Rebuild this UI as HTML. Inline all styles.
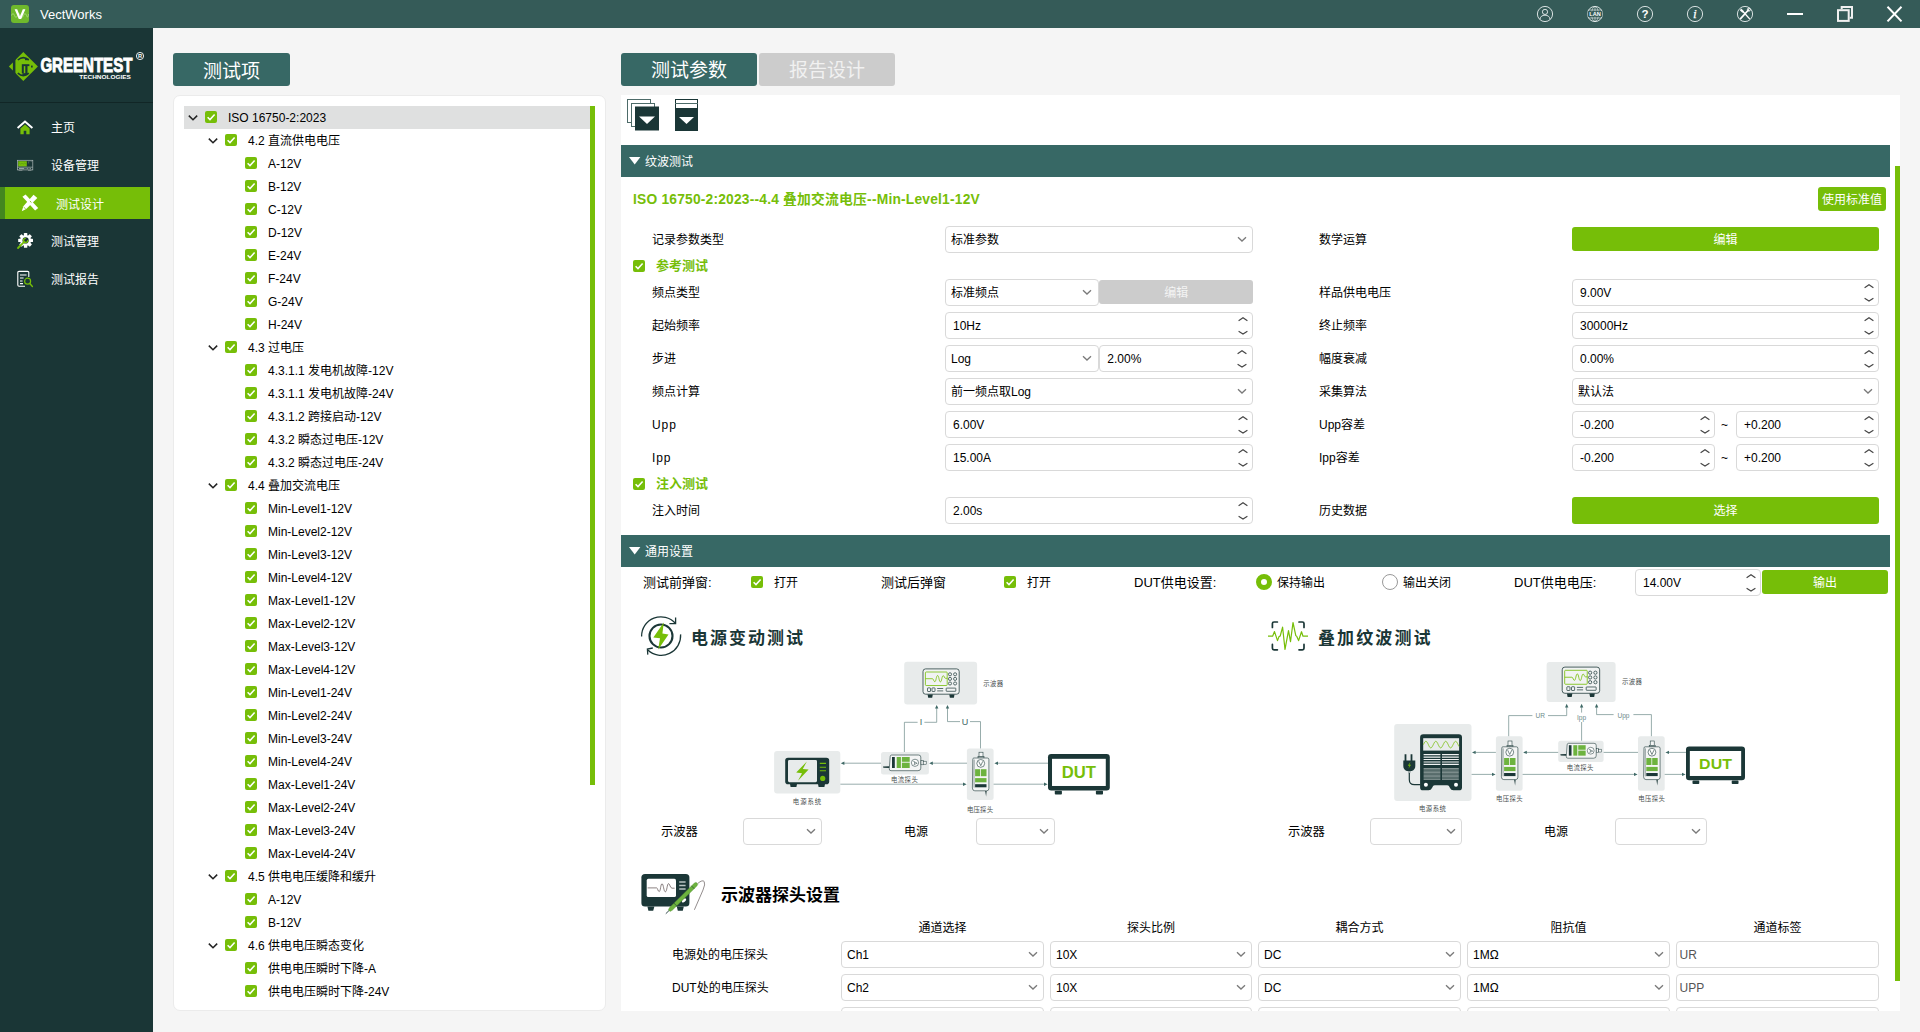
<!DOCTYPE html>
<html lang="zh-CN"><head><meta charset="utf-8"><title>VectWorks</title>
<style>
*{box-sizing:border-box;margin:0;padding:0}
html,body{width:1920px;height:1032px;overflow:hidden}
body{position:relative;background:#f5f5f5;font-family:"Liberation Sans","Noto Sans CJK SC",sans-serif;font-size:12px;color:#000}
.a{position:absolute}
.t{position:absolute;white-space:nowrap}
#tb{left:0;top:0;width:1920px;height:28px;background:#355b58}
#sb{left:0;top:28px;width:153px;height:1004px;background:#1a3636}
.nav{position:absolute;left:51px;color:#fff;font-size:12px;line-height:20px;white-space:nowrap}
.btn{position:absolute;color:#fff;text-align:center;border-radius:3px;white-space:nowrap}
.row{position:absolute;left:0;height:23px;line-height:25px;font-size:12px;white-space:nowrap;color:#000}
.cb{position:absolute;width:12px;height:12px;background:#76be08;border-radius:2px}
.cb svg{position:absolute;left:0;top:0}
.inp{position:absolute;height:27px;border:1px solid #d9d9d9;border-radius:4px;background:#fff;font-size:12px;line-height:27px;padding-left:5px;white-space:nowrap;color:#000}
.lbl{position:absolute;font-size:12px;line-height:20px;white-space:nowrap;color:#000}
.sec{position:absolute;left:621px;width:1269px;height:32px;background:#376865;color:#fff;font-size:12px;line-height:32px}
.gbtn{position:absolute;background:#76be08;color:#fff;text-align:center;border-radius:3px;font-size:12px;white-space:nowrap}
</style></head>
<body>
<div class="a" id="tb"></div>
<svg class="a" style="left:11px;top:5px" width="18" height="18" viewBox="0 0 18 18"><rect width="18" height="18" rx="3" fill="#6fb92c"/><path d="M0.5 10.5 Q2 6.5 3.5 10.5 T6.5 10.5 T9.5 10.5 T12.5 10.5 T15.5 10.5 T17.5 9" fill="none" stroke="#a6d67c" stroke-width="0.8"/><path d="M3.6 4.2 L6.2 4.2 L9 11.2 L11.8 4.2 L14.4 4.2 L10.2 14 L7.8 14 Z" fill="#fff"/></svg>
<div class="t" style="left:40px;top:5px;font-size:13px;line-height:20px;color:#fff">VectWorks</div>
<svg class="a" style="left:1536px;top:5px" width="18" height="18" viewBox="0 0 18 18"><circle cx="9" cy="9" r="7.6" fill="none" stroke="#e9eeee" stroke-width="0.9"/><circle cx="9" cy="6.9" r="2.6" fill="none" stroke="#e9eeee" stroke-width="0.9"/><path d="M3.9 14.4 Q4.6 10.2 9 10.2 Q13.4 10.2 14.1 14.4" fill="none" stroke="#e9eeee" stroke-width="0.9"/></svg>
<svg class="a" style="left:1586px;top:5px" width="18" height="18" viewBox="0 0 18 18"><circle cx="9" cy="9" r="7.6" fill="none" stroke="#e9eeee" stroke-width="0.9"/><ellipse cx="9" cy="9" rx="3.4" ry="7.6" fill="none" stroke="#e9eeee" stroke-width="0.6"/><path d="M9 1.4V16.6M2.6 5H15.4M2.6 13H15.4" stroke="#e9eeee" stroke-width="0.6" fill="none"/><rect x="1.6" y="6.3" width="14.8" height="5.4" fill="#355b58"/><text x="9" y="11.1" font-family="Liberation Sans,sans-serif" font-size="5.6" font-weight="bold" fill="#fff" text-anchor="middle" textLength="11.5" lengthAdjust="spacingAndGlyphs">LAN</text></svg>
<svg class="a" style="left:1636px;top:5px" width="18" height="18" viewBox="0 0 18 18"><circle cx="9" cy="9" r="7.6" fill="none" stroke="#e9eeee" stroke-width="0.9"/><text x="9" y="13" font-family="Liberation Sans,sans-serif" font-size="11.5" font-weight="bold" fill="#fff" text-anchor="middle">?</text></svg>
<svg class="a" style="left:1686px;top:5px" width="18" height="18" viewBox="0 0 18 18"><circle cx="9" cy="9" r="7.6" fill="none" stroke="#e9eeee" stroke-width="0.9"/><text x="9" y="13.2" font-family="Liberation Serif,serif" font-size="13.5" font-style="italic" fill="#fff" stroke="#fff" stroke-width="0.25" text-anchor="middle">i</text></svg>
<svg class="a" style="left:1736px;top:5px" width="18" height="18" viewBox="0 0 18 18"><circle cx="9" cy="9" r="7.6" fill="none" stroke="#e9eeee" stroke-width="0.9"/><path d="M4.6 13.6 L12.4 5" stroke="#fff" stroke-width="1.7" stroke-linecap="round"/><path d="M13.4 13.6 L7.2 6.8" stroke="#fff" stroke-width="1.4" stroke-linecap="round"/><path d="M5.2 3.6 L8 6.2 L6.4 7.8 L3.8 5.2 Z" fill="#fff"/><circle cx="12.9" cy="4.6" r="1.5" fill="none" stroke="#fff" stroke-width="1"/></svg>
<svg class="a" style="left:1780px;top:0" width="140" height="28" viewBox="1780 0 140 28"><path d="M1787 14H1803" stroke="#fff" stroke-width="2"/><path d="M1841.7 9.2V6.9H1852V17.8H1849.7" fill="none" stroke="#f0f0f0" stroke-width="2"/><rect x="1838" y="10.2" width="10.7" height="10.7" fill="none" stroke="#f0f0f0" stroke-width="2"/><path d="M1887.5 6.8L1901.5 21.4M1901.5 6.8L1887.5 21.4" stroke="#fff" stroke-width="2"/></svg>
<div class="a" id="sb"></div>
<div class="a" style="left:0;top:101.5px;width:153px;height:1.5px;background:#112626"></div>
<svg class="a" style="left:0;top:40px" width="153" height="50" viewBox="0 40 153 50">
<path d="M23.3 52 L37.9 66.5 L23.3 81 L8.9 66.5 Z" fill="#76be08"/>
<rect x="12.9" y="58" width="2.5" height="17" fill="#1a3636"/>
<path d="M17.8 60 Q23.3 55.4 28.8 60" fill="none" stroke="#1a3636" stroke-width="1.6"/>
<path d="M17.8 73.2 Q23.3 78 28.8 73.2" fill="none" stroke="#1a3636" stroke-width="1.6"/>
<rect x="25" y="58.6" width="3.6" height="1.6" fill="#1a3636"/>
<rect x="21.8" y="64.2" width="7.6" height="1.9" fill="#1a3636"/>
<rect x="21.8" y="66" width="2" height="7.2" fill="#1a3636"/>
<rect x="25.3" y="66" width="2.2" height="9" fill="#1a3636"/>
<rect x="22.4" y="73.2" width="5.1" height="1.8" fill="#1a3636"/>
<rect x="31" y="65.6" width="1.7" height="1.9" fill="#1a3636"/>
<text x="40.4" y="72.2" font-family="Liberation Sans,sans-serif" font-weight="bold" font-size="20.4" fill="#fff" stroke="#fff" stroke-width="0.95" textLength="92" lengthAdjust="spacingAndGlyphs">GREENTEST</text>
<text x="79.3" y="79" font-family="Liberation Sans,sans-serif" font-weight="bold" font-size="6.2" fill="#fff" textLength="51.5" lengthAdjust="spacingAndGlyphs">TECHNOLOGIES</text>
<circle cx="140" cy="56" r="3.6" fill="none" stroke="#fff" stroke-width="0.9"/>
<text x="140" y="58.2" font-family="Liberation Sans,sans-serif" font-weight="bold" font-size="5.6" fill="#fff" text-anchor="middle">R</text>
</svg>
<div class="a" style="left:0;top:187px;width:150px;height:32px;background:#76be08"></div>
<div class="a" style="left:0;top:187px;width:5px;height:32px;background:#43871f"></div>
<div class="nav" style="left:51px;top:118.30000000000001px">主页</div>
<div class="nav" style="left:51px;top:156.3px">设备管理</div>
<div class="nav" style="left:56px;top:194.5px">测试设计</div>
<div class="nav" style="left:51px;top:231.8px">测试管理</div>
<div class="nav" style="left:51px;top:269.8px">测试报告</div>
<svg class="a" style="left:16px;top:119px" width="18" height="18" viewBox="0 0 18 18"><path d="M4.4 9.6 V15.2 H7.7 V11.8 H10.3 V15.2 H13.6 V9.6 L9 5.6 Z" fill="#76be08"/><path d="M1.6 9 L9 2.6 L16.4 9" fill="none" stroke="#fff" stroke-width="2" stroke-linejoin="miter"/></svg>
<svg class="a" style="left:16px;top:157px" width="18" height="18" viewBox="0 0 18 18"><rect x="1.4" y="3.3" width="15.4" height="9.6" fill="none" stroke="#aeb9b9" stroke-width="0.7"/><rect x="2.2" y="4.2" width="8.6" height="5.2" fill="#76be08"/><path d="M2.4 7 L3.6 6.2 L4.8 7.2 L6 6.2 L7.2 7.2 L8.4 6.2 L10.4 7" stroke="#5a9a10" stroke-width="0.7" fill="none"/><path d="M12.4 4.6H13.4M14.6 4.6H15.8M12.6 5.2V6.4" stroke="#7d8a8a" stroke-width="0.6"/><path d="M1.4 10.2H16.8" stroke="#aeb9b9" stroke-width="0.7"/><path d="M3 11.6H8.4" stroke="#dfe5e5" stroke-width="0.7"/><path d="M9.6 11.6H15.4" stroke="#aeb9b9" stroke-width="0.8" stroke-dasharray="0.9 0.6"/><path d="M2.6 13.5H6.4M12 13.5H15.4" stroke="#8b9898" stroke-width="0.7"/></svg>
<svg class="a" style="left:20px;top:193px" width="20" height="20" viewBox="0 0 18 18"><path d="M2.2 3.4 L5 1.4 L16.4 13.4 L13.6 15.8 Z" fill="#fff"/><path d="M12.2 1.6 L15.6 4.6 L5.6 14.4 L1.6 16.4 L3 12 Z" fill="#fff"/><path d="M8.9 7.2 L10.3 8.6" stroke="#76be08" stroke-width="0.8"/><path d="M3.2 12.6 L5.2 14.4" stroke="#76be08" stroke-width="0.7"/></svg>
<svg class="a" style="left:16px;top:232px" width="18" height="18" viewBox="0 0 18 18"><g transform="translate(9.6 8.4)"><g fill="#fff"><rect x="-1.7" y="-7.4" width="3.4" height="14.8" rx="0.6"/><rect x="-1.7" y="-7.4" width="3.4" height="14.8" rx="0.6" transform="rotate(45)"/><rect x="-1.7" y="-7.4" width="3.4" height="14.8" rx="0.6" transform="rotate(90)"/><rect x="-1.7" y="-7.4" width="3.4" height="14.8" rx="0.6" transform="rotate(135)"/><circle r="5.4"/></g><circle r="3.1" fill="#1a3636"/></g><path d="M2 16 L8.4 9.6" stroke="#76be08" stroke-width="1.8" stroke-linecap="round"/><circle cx="9.6" cy="8.4" r="2.1" fill="none" stroke="#76be08" stroke-width="1.3" stroke-dasharray="9.5 4" transform="rotate(-10 9.6 8.4)"/></svg>
<svg class="a" style="left:16px;top:270px" width="18" height="18" viewBox="0 0 18 18"><path d="M12.8 7 V2.6 Q12.8 1.4 11.6 1.4 H3 Q1.8 1.4 1.8 2.6 V15 Q1.8 16.2 3 16.2 H9" fill="none" stroke="#fff" stroke-width="1.1"/><path d="M4 5H10.6M4 8H7.6M4 11H6.6M4 13.6H7" stroke="#fff" stroke-width="1.1"/><circle cx="11.6" cy="11.2" r="3" fill="none" stroke="#76be08" stroke-width="1.2"/><path d="M13.8 13.6 L16.4 16.4" stroke="#76be08" stroke-width="1.4" stroke-linecap="round"/></svg>
<div class="btn" style="left:173px;top:53px;width:117px;height:33px;background:#376865;font-size:19px;line-height:37px">测试项</div>
<div class="a" style="left:173px;top:95px;width:433px;height:916px;background:#fff;border:1px solid #ebebeb;border-radius:7px"></div>
<div class="a" style="left:184px;top:106px;width:406px;height:23px;background:#dfe0e0"></div>
<div class="a" style="left:590px;top:106px;width:5px;height:679px;background:#76be08"></div>
<svg class="a" style="left:187px;top:112.5px" width="12" height="10" viewBox="0 0 12 10"><path d="M1.8 2.6 L6 6.8 L10.2 2.6" fill="none" stroke="#222" stroke-width="1.5"/></svg><div class="cb" style="left:205px;top:111px"><svg width="12" height="12" viewBox="0 0 12 12"><path d="M2.6 6.2 L5 8.6 L9.6 3.6" fill="none" stroke="#fff" stroke-width="1.5"/></svg></div><div class="row" style="left:228px;top:106px">ISO 16750-2:2023</div>
<svg class="a" style="left:207px;top:135.5px" width="12" height="10" viewBox="0 0 12 10"><path d="M1.8 2.6 L6 6.8 L10.2 2.6" fill="none" stroke="#222" stroke-width="1.5"/></svg><div class="cb" style="left:225px;top:134px"><svg width="12" height="12" viewBox="0 0 12 12"><path d="M2.6 6.2 L5 8.6 L9.6 3.6" fill="none" stroke="#fff" stroke-width="1.5"/></svg></div><div class="row" style="left:248px;top:129px">4.2 直流供电电压</div>
<div class="cb" style="left:245px;top:157px"><svg width="12" height="12" viewBox="0 0 12 12"><path d="M2.6 6.2 L5 8.6 L9.6 3.6" fill="none" stroke="#fff" stroke-width="1.5"/></svg></div><div class="row" style="left:268px;top:152px">A-12V</div>
<div class="cb" style="left:245px;top:180px"><svg width="12" height="12" viewBox="0 0 12 12"><path d="M2.6 6.2 L5 8.6 L9.6 3.6" fill="none" stroke="#fff" stroke-width="1.5"/></svg></div><div class="row" style="left:268px;top:175px">B-12V</div>
<div class="cb" style="left:245px;top:203px"><svg width="12" height="12" viewBox="0 0 12 12"><path d="M2.6 6.2 L5 8.6 L9.6 3.6" fill="none" stroke="#fff" stroke-width="1.5"/></svg></div><div class="row" style="left:268px;top:198px">C-12V</div>
<div class="cb" style="left:245px;top:226px"><svg width="12" height="12" viewBox="0 0 12 12"><path d="M2.6 6.2 L5 8.6 L9.6 3.6" fill="none" stroke="#fff" stroke-width="1.5"/></svg></div><div class="row" style="left:268px;top:221px">D-12V</div>
<div class="cb" style="left:245px;top:249px"><svg width="12" height="12" viewBox="0 0 12 12"><path d="M2.6 6.2 L5 8.6 L9.6 3.6" fill="none" stroke="#fff" stroke-width="1.5"/></svg></div><div class="row" style="left:268px;top:244px">E-24V</div>
<div class="cb" style="left:245px;top:272px"><svg width="12" height="12" viewBox="0 0 12 12"><path d="M2.6 6.2 L5 8.6 L9.6 3.6" fill="none" stroke="#fff" stroke-width="1.5"/></svg></div><div class="row" style="left:268px;top:267px">F-24V</div>
<div class="cb" style="left:245px;top:295px"><svg width="12" height="12" viewBox="0 0 12 12"><path d="M2.6 6.2 L5 8.6 L9.6 3.6" fill="none" stroke="#fff" stroke-width="1.5"/></svg></div><div class="row" style="left:268px;top:290px">G-24V</div>
<div class="cb" style="left:245px;top:318px"><svg width="12" height="12" viewBox="0 0 12 12"><path d="M2.6 6.2 L5 8.6 L9.6 3.6" fill="none" stroke="#fff" stroke-width="1.5"/></svg></div><div class="row" style="left:268px;top:313px">H-24V</div>
<svg class="a" style="left:207px;top:342.5px" width="12" height="10" viewBox="0 0 12 10"><path d="M1.8 2.6 L6 6.8 L10.2 2.6" fill="none" stroke="#222" stroke-width="1.5"/></svg><div class="cb" style="left:225px;top:341px"><svg width="12" height="12" viewBox="0 0 12 12"><path d="M2.6 6.2 L5 8.6 L9.6 3.6" fill="none" stroke="#fff" stroke-width="1.5"/></svg></div><div class="row" style="left:248px;top:336px">4.3 过电压</div>
<div class="cb" style="left:245px;top:364px"><svg width="12" height="12" viewBox="0 0 12 12"><path d="M2.6 6.2 L5 8.6 L9.6 3.6" fill="none" stroke="#fff" stroke-width="1.5"/></svg></div><div class="row" style="left:268px;top:359px">4.3.1.1 发电机故障-12V</div>
<div class="cb" style="left:245px;top:387px"><svg width="12" height="12" viewBox="0 0 12 12"><path d="M2.6 6.2 L5 8.6 L9.6 3.6" fill="none" stroke="#fff" stroke-width="1.5"/></svg></div><div class="row" style="left:268px;top:382px">4.3.1.1 发电机故障-24V</div>
<div class="cb" style="left:245px;top:410px"><svg width="12" height="12" viewBox="0 0 12 12"><path d="M2.6 6.2 L5 8.6 L9.6 3.6" fill="none" stroke="#fff" stroke-width="1.5"/></svg></div><div class="row" style="left:268px;top:405px">4.3.1.2 跨接启动-12V</div>
<div class="cb" style="left:245px;top:433px"><svg width="12" height="12" viewBox="0 0 12 12"><path d="M2.6 6.2 L5 8.6 L9.6 3.6" fill="none" stroke="#fff" stroke-width="1.5"/></svg></div><div class="row" style="left:268px;top:428px">4.3.2 瞬态过电压-12V</div>
<div class="cb" style="left:245px;top:456px"><svg width="12" height="12" viewBox="0 0 12 12"><path d="M2.6 6.2 L5 8.6 L9.6 3.6" fill="none" stroke="#fff" stroke-width="1.5"/></svg></div><div class="row" style="left:268px;top:451px">4.3.2 瞬态过电压-24V</div>
<svg class="a" style="left:207px;top:480.5px" width="12" height="10" viewBox="0 0 12 10"><path d="M1.8 2.6 L6 6.8 L10.2 2.6" fill="none" stroke="#222" stroke-width="1.5"/></svg><div class="cb" style="left:225px;top:479px"><svg width="12" height="12" viewBox="0 0 12 12"><path d="M2.6 6.2 L5 8.6 L9.6 3.6" fill="none" stroke="#fff" stroke-width="1.5"/></svg></div><div class="row" style="left:248px;top:474px">4.4 叠加交流电压</div>
<div class="cb" style="left:245px;top:502px"><svg width="12" height="12" viewBox="0 0 12 12"><path d="M2.6 6.2 L5 8.6 L9.6 3.6" fill="none" stroke="#fff" stroke-width="1.5"/></svg></div><div class="row" style="left:268px;top:497px">Min-Level1-12V</div>
<div class="cb" style="left:245px;top:525px"><svg width="12" height="12" viewBox="0 0 12 12"><path d="M2.6 6.2 L5 8.6 L9.6 3.6" fill="none" stroke="#fff" stroke-width="1.5"/></svg></div><div class="row" style="left:268px;top:520px">Min-Level2-12V</div>
<div class="cb" style="left:245px;top:548px"><svg width="12" height="12" viewBox="0 0 12 12"><path d="M2.6 6.2 L5 8.6 L9.6 3.6" fill="none" stroke="#fff" stroke-width="1.5"/></svg></div><div class="row" style="left:268px;top:543px">Min-Level3-12V</div>
<div class="cb" style="left:245px;top:571px"><svg width="12" height="12" viewBox="0 0 12 12"><path d="M2.6 6.2 L5 8.6 L9.6 3.6" fill="none" stroke="#fff" stroke-width="1.5"/></svg></div><div class="row" style="left:268px;top:566px">Min-Level4-12V</div>
<div class="cb" style="left:245px;top:594px"><svg width="12" height="12" viewBox="0 0 12 12"><path d="M2.6 6.2 L5 8.6 L9.6 3.6" fill="none" stroke="#fff" stroke-width="1.5"/></svg></div><div class="row" style="left:268px;top:589px">Max-Level1-12V</div>
<div class="cb" style="left:245px;top:617px"><svg width="12" height="12" viewBox="0 0 12 12"><path d="M2.6 6.2 L5 8.6 L9.6 3.6" fill="none" stroke="#fff" stroke-width="1.5"/></svg></div><div class="row" style="left:268px;top:612px">Max-Level2-12V</div>
<div class="cb" style="left:245px;top:640px"><svg width="12" height="12" viewBox="0 0 12 12"><path d="M2.6 6.2 L5 8.6 L9.6 3.6" fill="none" stroke="#fff" stroke-width="1.5"/></svg></div><div class="row" style="left:268px;top:635px">Max-Level3-12V</div>
<div class="cb" style="left:245px;top:663px"><svg width="12" height="12" viewBox="0 0 12 12"><path d="M2.6 6.2 L5 8.6 L9.6 3.6" fill="none" stroke="#fff" stroke-width="1.5"/></svg></div><div class="row" style="left:268px;top:658px">Max-Level4-12V</div>
<div class="cb" style="left:245px;top:686px"><svg width="12" height="12" viewBox="0 0 12 12"><path d="M2.6 6.2 L5 8.6 L9.6 3.6" fill="none" stroke="#fff" stroke-width="1.5"/></svg></div><div class="row" style="left:268px;top:681px">Min-Level1-24V</div>
<div class="cb" style="left:245px;top:709px"><svg width="12" height="12" viewBox="0 0 12 12"><path d="M2.6 6.2 L5 8.6 L9.6 3.6" fill="none" stroke="#fff" stroke-width="1.5"/></svg></div><div class="row" style="left:268px;top:704px">Min-Level2-24V</div>
<div class="cb" style="left:245px;top:732px"><svg width="12" height="12" viewBox="0 0 12 12"><path d="M2.6 6.2 L5 8.6 L9.6 3.6" fill="none" stroke="#fff" stroke-width="1.5"/></svg></div><div class="row" style="left:268px;top:727px">Min-Level3-24V</div>
<div class="cb" style="left:245px;top:755px"><svg width="12" height="12" viewBox="0 0 12 12"><path d="M2.6 6.2 L5 8.6 L9.6 3.6" fill="none" stroke="#fff" stroke-width="1.5"/></svg></div><div class="row" style="left:268px;top:750px">Min-Level4-24V</div>
<div class="cb" style="left:245px;top:778px"><svg width="12" height="12" viewBox="0 0 12 12"><path d="M2.6 6.2 L5 8.6 L9.6 3.6" fill="none" stroke="#fff" stroke-width="1.5"/></svg></div><div class="row" style="left:268px;top:773px">Max-Level1-24V</div>
<div class="cb" style="left:245px;top:801px"><svg width="12" height="12" viewBox="0 0 12 12"><path d="M2.6 6.2 L5 8.6 L9.6 3.6" fill="none" stroke="#fff" stroke-width="1.5"/></svg></div><div class="row" style="left:268px;top:796px">Max-Level2-24V</div>
<div class="cb" style="left:245px;top:824px"><svg width="12" height="12" viewBox="0 0 12 12"><path d="M2.6 6.2 L5 8.6 L9.6 3.6" fill="none" stroke="#fff" stroke-width="1.5"/></svg></div><div class="row" style="left:268px;top:819px">Max-Level3-24V</div>
<div class="cb" style="left:245px;top:847px"><svg width="12" height="12" viewBox="0 0 12 12"><path d="M2.6 6.2 L5 8.6 L9.6 3.6" fill="none" stroke="#fff" stroke-width="1.5"/></svg></div><div class="row" style="left:268px;top:842px">Max-Level4-24V</div>
<svg class="a" style="left:207px;top:871.5px" width="12" height="10" viewBox="0 0 12 10"><path d="M1.8 2.6 L6 6.8 L10.2 2.6" fill="none" stroke="#222" stroke-width="1.5"/></svg><div class="cb" style="left:225px;top:870px"><svg width="12" height="12" viewBox="0 0 12 12"><path d="M2.6 6.2 L5 8.6 L9.6 3.6" fill="none" stroke="#fff" stroke-width="1.5"/></svg></div><div class="row" style="left:248px;top:865px">4.5 供电电压缓降和缓升</div>
<div class="cb" style="left:245px;top:893px"><svg width="12" height="12" viewBox="0 0 12 12"><path d="M2.6 6.2 L5 8.6 L9.6 3.6" fill="none" stroke="#fff" stroke-width="1.5"/></svg></div><div class="row" style="left:268px;top:888px">A-12V</div>
<div class="cb" style="left:245px;top:916px"><svg width="12" height="12" viewBox="0 0 12 12"><path d="M2.6 6.2 L5 8.6 L9.6 3.6" fill="none" stroke="#fff" stroke-width="1.5"/></svg></div><div class="row" style="left:268px;top:911px">B-12V</div>
<svg class="a" style="left:207px;top:940.5px" width="12" height="10" viewBox="0 0 12 10"><path d="M1.8 2.6 L6 6.8 L10.2 2.6" fill="none" stroke="#222" stroke-width="1.5"/></svg><div class="cb" style="left:225px;top:939px"><svg width="12" height="12" viewBox="0 0 12 12"><path d="M2.6 6.2 L5 8.6 L9.6 3.6" fill="none" stroke="#fff" stroke-width="1.5"/></svg></div><div class="row" style="left:248px;top:934px">4.6 供电电压瞬态变化</div>
<div class="cb" style="left:245px;top:962px"><svg width="12" height="12" viewBox="0 0 12 12"><path d="M2.6 6.2 L5 8.6 L9.6 3.6" fill="none" stroke="#fff" stroke-width="1.5"/></svg></div><div class="row" style="left:268px;top:957px">供电电压瞬时下降-A</div>
<div class="cb" style="left:245px;top:985px"><svg width="12" height="12" viewBox="0 0 12 12"><path d="M2.6 6.2 L5 8.6 L9.6 3.6" fill="none" stroke="#fff" stroke-width="1.5"/></svg></div><div class="row" style="left:268px;top:980px">供电电压瞬时下降-24V</div>
<div class="btn" style="left:621px;top:53px;width:136px;height:33px;background:#376865;font-size:19px;line-height:36px">测试参数</div>
<div class="btn" style="left:759px;top:53px;width:136px;height:33px;background:#cccccc;color:#f1f1f1;font-size:19px;line-height:36px">报告设计</div>
<div class="a" style="left:621px;top:95px;width:1279px;height:916px;background:#fff"></div>
<svg class="a" style="left:626px;top:98px" width="76" height="34" viewBox="626 98 76 34">
<rect x="627.5" y="99.5" width="23" height="23" fill="#fff" stroke="#4d6b69" stroke-width="1"/>
<rect x="631.5" y="103.5" width="23" height="23" fill="#fff" stroke="#4d6b69" stroke-width="1"/>
<rect x="635" y="106.5" width="24" height="24" fill="#1a3636"/>
<path d="M639 116.5 H655 L647 124 Z" fill="#fff"/>
<rect x="675.5" y="99.5" width="22" height="31" fill="#fff" stroke="#1a3636" stroke-width="1"/>
<path d="M675 103.5H698" stroke="#4d6b69" stroke-width="1"/>
<rect x="675" y="108" width="23" height="23" fill="#1a3636"/>
<path d="M679 117 H694 L686.5 124 Z" fill="#fff"/>
</svg>
<div class="sec" style="top:145px"><svg class="a" style="left:8px;top:12px" width="12" height="8" viewBox="0 0 12 8"><path d="M0 0H11.4L5.7 7.6Z" fill="#fff"/></svg><span class="a" style="left:24px;top:1px">纹波测试</span></div>
<div class="t" style="left:633px;top:189.6px;font-size:13.8px;letter-spacing:0.2px;line-height:20px;font-weight:bold;color:#76be08">ISO 16750-2:2023--4.4 叠加交流电压--Min-Level1-12V</div>
<div class="gbtn" style="left:1818px;top:187px;width:68px;height:24px;line-height:26px">使用标准值</div>
<div class="lbl" style="left:652px;top:229.5px;">记录参数类型</div>
<div class="inp" style="left:945px;top:226px;width:308px;height:27px;line-height:27px">标准参数<svg class="a" style="right:5.5px;top:9px" width="10" height="6" viewBox="0 0 10 6"><path d="M1 1.2 L5 5 L9 1.2" fill="none" stroke="#7a7a7a" stroke-width="1.3"/></svg></div>
<div class="cb" style="left:633px;top:260px"><svg width="12" height="12" viewBox="0 0 12 12"><path d="M2.6 6.2 L5 8.6 L9.6 3.6" fill="none" stroke="#fff" stroke-width="1.5"/></svg></div><div class="lbl" style="left:656px;top:256px;font-size:13px;font-weight:bold;color:#76be08">参考测试</div>
<div class="lbl" style="left:652px;top:282.5px;">频点类型</div>
<div class="inp" style="left:945px;top:279px;width:153.6px;height:27px;line-height:27px">标准频点<svg class="a" style="right:5.5px;top:9px" width="10" height="6" viewBox="0 0 10 6"><path d="M1 1.2 L5 5 L9 1.2" fill="none" stroke="#7a7a7a" stroke-width="1.3"/></svg></div>
<div class="gbtn" style="left:1099.3px;top:280px;width:153.7px;height:24px;line-height:26.5px;background:#cccccc;color:#f4f4f4">编辑</div>
<div class="lbl" style="left:652px;top:315.5px;">起始频率</div>
<div class="inp" style="left:945px;top:312px;width:308px;padding-left:7px;line-height:27.5px">10Hz<svg class="a" style="right:4.5px;top:3px" width="10" height="20" viewBox="0 0 10 20"><path d="M0.6 4.8 L5 1.8 L9.4 4.8" fill="none" stroke="#444" stroke-width="1.15"/><path d="M0.6 15.3 L5 18 L9.4 15.3" fill="none" stroke="#444" stroke-width="1.15"/></svg></div>
<div class="lbl" style="left:652px;top:348.5px;">步进</div>
<div class="inp" style="left:945px;top:345px;width:153.6px;height:27px;line-height:27px">Log<svg class="a" style="right:5.5px;top:9px" width="10" height="6" viewBox="0 0 10 6"><path d="M1 1.2 L5 5 L9 1.2" fill="none" stroke="#7a7a7a" stroke-width="1.3"/></svg></div>
<div class="inp" style="left:1099.3px;top:345px;width:153.7px;padding-left:7px;line-height:27.5px">2.00%<svg class="a" style="right:4.5px;top:3px" width="10" height="20" viewBox="0 0 10 20"><path d="M0.6 4.8 L5 1.8 L9.4 4.8" fill="none" stroke="#444" stroke-width="1.15"/><path d="M0.6 15.3 L5 18 L9.4 15.3" fill="none" stroke="#444" stroke-width="1.15"/></svg></div>
<div class="lbl" style="left:652px;top:381.5px;">频点计算</div>
<div class="inp" style="left:945px;top:378px;width:308px;height:27px;line-height:27px">前一频点取Log<svg class="a" style="right:5.5px;top:9px" width="10" height="6" viewBox="0 0 10 6"><path d="M1 1.2 L5 5 L9 1.2" fill="none" stroke="#7a7a7a" stroke-width="1.3"/></svg></div>
<div class="lbl" style="left:652px;top:414.5px;letter-spacing:0.9px">Upp</div>
<div class="inp" style="left:945px;top:411px;width:308px;padding-left:7px;line-height:27.5px">6.00V<svg class="a" style="right:4.5px;top:3px" width="10" height="20" viewBox="0 0 10 20"><path d="M0.6 4.8 L5 1.8 L9.4 4.8" fill="none" stroke="#444" stroke-width="1.15"/><path d="M0.6 15.3 L5 18 L9.4 15.3" fill="none" stroke="#444" stroke-width="1.15"/></svg></div>
<div class="lbl" style="left:652px;top:447.5px;letter-spacing:0.9px">Ipp</div>
<div class="inp" style="left:945px;top:444px;width:308px;padding-left:7px;line-height:27.5px">15.00A<svg class="a" style="right:4.5px;top:3px" width="10" height="20" viewBox="0 0 10 20"><path d="M0.6 4.8 L5 1.8 L9.4 4.8" fill="none" stroke="#444" stroke-width="1.15"/><path d="M0.6 15.3 L5 18 L9.4 15.3" fill="none" stroke="#444" stroke-width="1.15"/></svg></div>
<div class="cb" style="left:633px;top:478px"><svg width="12" height="12" viewBox="0 0 12 12"><path d="M2.6 6.2 L5 8.6 L9.6 3.6" fill="none" stroke="#fff" stroke-width="1.5"/></svg></div><div class="lbl" style="left:656px;top:474px;font-size:13px;font-weight:bold;color:#76be08">注入测试</div>
<div class="lbl" style="left:652px;top:500.5px;">注入时间</div>
<div class="inp" style="left:945px;top:497px;width:308px;padding-left:7px;line-height:27.5px">2.00s<svg class="a" style="right:4.5px;top:3px" width="10" height="20" viewBox="0 0 10 20"><path d="M0.6 4.8 L5 1.8 L9.4 4.8" fill="none" stroke="#444" stroke-width="1.15"/><path d="M0.6 15.3 L5 18 L9.4 15.3" fill="none" stroke="#444" stroke-width="1.15"/></svg></div>
<div class="lbl" style="left:1319px;top:229.5px;">数学运算</div>
<div class="gbtn" style="left:1572px;top:227px;width:307px;height:24px;line-height:26.5px">编辑</div>
<div class="lbl" style="left:1319px;top:282.5px;">样品供电电压</div>
<div class="inp" style="left:1572px;top:279px;width:307px;padding-left:7px;line-height:27.5px">9.00V<svg class="a" style="right:4.5px;top:3px" width="10" height="20" viewBox="0 0 10 20"><path d="M0.6 4.8 L5 1.8 L9.4 4.8" fill="none" stroke="#444" stroke-width="1.15"/><path d="M0.6 15.3 L5 18 L9.4 15.3" fill="none" stroke="#444" stroke-width="1.15"/></svg></div>
<div class="lbl" style="left:1319px;top:315.5px;">终止频率</div>
<div class="inp" style="left:1572px;top:312px;width:307px;padding-left:7px;line-height:27.5px">30000Hz<svg class="a" style="right:4.5px;top:3px" width="10" height="20" viewBox="0 0 10 20"><path d="M0.6 4.8 L5 1.8 L9.4 4.8" fill="none" stroke="#444" stroke-width="1.15"/><path d="M0.6 15.3 L5 18 L9.4 15.3" fill="none" stroke="#444" stroke-width="1.15"/></svg></div>
<div class="lbl" style="left:1319px;top:348.5px;">幅度衰减</div>
<div class="inp" style="left:1572px;top:345px;width:307px;padding-left:7px;line-height:27.5px">0.00%<svg class="a" style="right:4.5px;top:3px" width="10" height="20" viewBox="0 0 10 20"><path d="M0.6 4.8 L5 1.8 L9.4 4.8" fill="none" stroke="#444" stroke-width="1.15"/><path d="M0.6 15.3 L5 18 L9.4 15.3" fill="none" stroke="#444" stroke-width="1.15"/></svg></div>
<div class="lbl" style="left:1319px;top:381.5px;">采集算法</div>
<div class="inp" style="left:1572px;top:378px;width:307px;height:27px;line-height:27px">默认法<svg class="a" style="right:5.5px;top:9px" width="10" height="6" viewBox="0 0 10 6"><path d="M1 1.2 L5 5 L9 1.2" fill="none" stroke="#7a7a7a" stroke-width="1.3"/></svg></div>
<div class="lbl" style="left:1319px;top:414.5px;">Upp容差</div>
<div class="inp" style="left:1572px;top:411px;width:143px;padding-left:7px;line-height:27.5px">-0.200<svg class="a" style="right:4.5px;top:3px" width="10" height="20" viewBox="0 0 10 20"><path d="M0.6 4.8 L5 1.8 L9.4 4.8" fill="none" stroke="#444" stroke-width="1.15"/><path d="M0.6 15.3 L5 18 L9.4 15.3" fill="none" stroke="#444" stroke-width="1.15"/></svg></div>
<div class="lbl" style="left:1721px;top:414.5px;">~</div>
<div class="inp" style="left:1736px;top:411px;width:143px;padding-left:7px;line-height:27.5px">+0.200<svg class="a" style="right:4.5px;top:3px" width="10" height="20" viewBox="0 0 10 20"><path d="M0.6 4.8 L5 1.8 L9.4 4.8" fill="none" stroke="#444" stroke-width="1.15"/><path d="M0.6 15.3 L5 18 L9.4 15.3" fill="none" stroke="#444" stroke-width="1.15"/></svg></div>
<div class="lbl" style="left:1319px;top:447.5px;">Ipp容差</div>
<div class="inp" style="left:1572px;top:444px;width:143px;padding-left:7px;line-height:27.5px">-0.200<svg class="a" style="right:4.5px;top:3px" width="10" height="20" viewBox="0 0 10 20"><path d="M0.6 4.8 L5 1.8 L9.4 4.8" fill="none" stroke="#444" stroke-width="1.15"/><path d="M0.6 15.3 L5 18 L9.4 15.3" fill="none" stroke="#444" stroke-width="1.15"/></svg></div>
<div class="lbl" style="left:1721px;top:447.5px;">~</div>
<div class="inp" style="left:1736px;top:444px;width:143px;padding-left:7px;line-height:27.5px">+0.200<svg class="a" style="right:4.5px;top:3px" width="10" height="20" viewBox="0 0 10 20"><path d="M0.6 4.8 L5 1.8 L9.4 4.8" fill="none" stroke="#444" stroke-width="1.15"/><path d="M0.6 15.3 L5 18 L9.4 15.3" fill="none" stroke="#444" stroke-width="1.15"/></svg></div>
<div class="lbl" style="left:1319px;top:500.5px;">历史数据</div>
<div class="gbtn" style="left:1572px;top:497px;width:307px;height:27px;line-height:29.5px">选择</div>
<div class="sec" style="top:535px"><svg class="a" style="left:8px;top:12px" width="12" height="8" viewBox="0 0 12 8"><path d="M0 0H11.4L5.7 7.6Z" fill="#fff"/></svg><span class="a" style="left:24px;top:1px">通用设置</span></div>
<div class="lbl" style="left:643px;top:572.5px;font-size:13px">测试前弹窗:</div>
<div class="cb" style="left:751px;top:576px"><svg width="12" height="12" viewBox="0 0 12 12"><path d="M2.6 6.2 L5 8.6 L9.6 3.6" fill="none" stroke="#fff" stroke-width="1.5"/></svg></div><div class="lbl" style="left:774px;top:572.5px;">打开</div>
<div class="lbl" style="left:881px;top:572.5px;font-size:13px">测试后弹窗</div>
<div class="cb" style="left:1004px;top:576px"><svg width="12" height="12" viewBox="0 0 12 12"><path d="M2.6 6.2 L5 8.6 L9.6 3.6" fill="none" stroke="#fff" stroke-width="1.5"/></svg></div><div class="lbl" style="left:1027px;top:572.5px;">打开</div>
<div class="lbl" style="left:1134px;top:572.5px;font-size:13px">DUT供电设置:</div>
<div class="a" style="left:1256px;top:574px;width:16px;height:16px;border-radius:50%;border:5px solid #76be08;background:#fff"></div>
<div class="lbl" style="left:1277px;top:572.5px;">保持输出</div>
<div class="a" style="left:1382px;top:574px;width:16px;height:16px;border-radius:50%;border:1.4px solid #999;background:#fff"></div>
<div class="lbl" style="left:1403px;top:572.5px;">输出关闭</div>
<div class="lbl" style="left:1514px;top:572.5px;font-size:13px">DUT供电电压:</div>
<div class="inp" style="left:1635px;top:569px;width:126px;padding-left:7px;line-height:27.5px">14.00V<svg class="a" style="right:4.5px;top:3px" width="10" height="20" viewBox="0 0 10 20"><path d="M0.6 4.8 L5 1.8 L9.4 4.8" fill="none" stroke="#444" stroke-width="1.15"/><path d="M0.6 15.3 L5 18 L9.4 15.3" fill="none" stroke="#444" stroke-width="1.15"/></svg></div>
<div class="gbtn" style="left:1762px;top:570px;width:126px;height:24px;line-height:26.5px">输出</div>
<div class="a" style="left:1895px;top:166px;width:5px;height:815px;background:#76be08"></div>
<svg class="a" style="left:621px;top:600px" width="1270" height="320" viewBox="621 600 1270 320"><g fill="none" stroke="#1b3737"><circle cx="661" cy="636" r="11.5" stroke-width="2.1"/>
<path d="M641.6 636.6A19.4 19.4 0 0 1 675.4 623.2" stroke-width="1.3"/><path d="M675.6 617.4V623.6H669.4" stroke-width="1.3"/>
<path d="M680.6 634.4A19.5 19.5 0 0 1 647.8 650" stroke-width="1.3"/><path d="M647.8 654.6L647.4 649L652.8 648" stroke-width="1.3"/></g>
<path d="M663.8 622.4L653.3 637.4L660 638.2L658.2 649.4L668.5 634.4L662.4 633.6Z" fill="#76be08"/><g fill="none" stroke="#1b3737" stroke-width="1.7" stroke-linecap="round"><path d="M1272.4 627.4V623.6Q1272.4 622 1274 622H1277.4"/><path d="M1299 622H1302.4Q1304 622 1304 623.6V627.4"/><path d="M1272.4 644.4V648.2Q1272.4 649.8 1274 649.8H1277.4"/><path d="M1299 649.8H1302.4Q1304 649.8 1304 648.2V644.4"/></g>
<path d="M1268 636.2H1272.6L1274.5 631.6L1277.5 640.6L1279 636.6L1280.2 636L1282.6 627.2L1285 649.4L1288.5 630.6L1290.5 641.7L1293 622.5L1295.8 635.6L1296.8 636.4L1298.6 640.6L1301.5 631.7L1303 636.2H1308" fill="none" stroke="#76be08" stroke-width="1.2" stroke-linejoin="round"/><rect x="904.2" y="661.8" width="72.9" height="42.7" rx="3" fill="#e8ebeb"/><g transform="translate(923 668.9) scale(1.0)"><rect x="0" y="0" width="36.2" height="25.3" rx="2.6" fill="#f1f3f3" stroke="#1b3737" stroke-width="0.75"/>
<path d="M4.6 25.5H9.8L9.2 28.8H5.2ZM26.3 25.5H31.5L30.9 28.8H26.9Z" fill="#1b3737"/>
<rect x="2.4" y="3.1" width="21.8" height="13.5" rx="0.8" fill="none" stroke="#76be08" stroke-width="0.8"/>
<path d="M2.4 9.8H9.4C10.6 9.8 10.6 12.8 11.8 12.8C13.2 12.8 13.2 6.6 14.6 6.6C16 6.6 16 13 17.4 13C18.8 13 18.8 6.8 20.2 6.8C21.4 6.8 21.4 9.4 22.4 9.4H24.2" fill="none" stroke="#76be08" stroke-width="0.8"/>
<g fill="none" stroke="#1b3737" stroke-width="0.7"><circle cx="27" cy="5.4" r="1.55"/><circle cx="32.1" cy="5.4" r="1.55"/><circle cx="27" cy="10" r="1.55"/><circle cx="32.1" cy="10" r="1.55"/><circle cx="27" cy="14.6" r="1.55"/><circle cx="32.1" cy="14.6" r="1.55"/>
<rect x="4.5" y="19" width="3" height="3.6" rx="0.5"/><rect x="9" y="19" width="3" height="3.6" rx="0.5"/><path d="M14.2 19.6H20.2M14.2 22H20.2"/><rect x="23.2" y="19.2" width="9.6" height="3.2" rx="0.4"/></g></g><text x="983.2" y="685.8" font-family="Liberation Sans,Noto Sans CJK SC,sans-serif" font-size="6.4" fill="#4a4f4f" text-anchor="start" textLength="20" lengthAdjust="spacing">示波器</text><rect x="774.1" y="751" width="66.2" height="42.4" rx="3" fill="#e8ebeb"/><rect x="785.2" y="757.8" width="44" height="26.4" rx="2.8" fill="#1b3737"/><rect x="788" y="759.9" width="29" height="22.3" rx="1.4" fill="#e8ebeb"/>
<path d="M790 784H797L796.4 787H790.6ZM818 784H825L824.4 787H818.6Z" fill="#1b3737"/>
<path d="M806.8 761.6L796.2 772.6L802 773.2L798 780.8L808.6 769.6L802.8 769Z" fill="#76be08"/>
<path d="M819.8 763.4H826M819.8 767.2H826M819.8 770.7H826" stroke="#76be08" stroke-width="1.1"/><circle cx="822.7" cy="778.4" r="2.6" fill="#76be08"/><text x="792.8" y="804.2" font-family="Liberation Sans,Noto Sans CJK SC,sans-serif" font-size="6.4" fill="#4a4f4f" text-anchor="start" textLength="28.4" lengthAdjust="spacing">电源系统</text><rect x="881" y="752" width="47.9" height="22.5" rx="2.5" fill="#e8ebeb"/><g transform="translate(889 755) scale(1.0)"><path d="M-6 11.6L0.4 11.2V13L-5.6 12.8Z" fill="#1b3737"/>
<path d="M2.6 0H29.4Q31.8 0 31.8 2V13.2Q31.8 15.7 29 15.7H2Q0 15.7 0.3 13.6L1.2 1.6Q1.4 0 2.6 0Z" fill="#f4f5f5" stroke="#1b3737" stroke-width="0.6"/>
<rect x="32" y="5.6" width="2.2" height="4.2" fill="#f4f5f5" stroke="#1b3737" stroke-width="0.5"/><rect x="34.2" y="6.2" width="3" height="3" fill="#f4f5f5" stroke="#1b3737" stroke-width="0.5"/>
<rect x="3" y="2" width="2.8" height="11" fill="#1b3737"/><rect x="7.7" y="2" width="4.2" height="11" fill="#6db33f"/><rect x="12.9" y="2" width="7.8" height="4.8" fill="#6db33f"/><rect x="12.9" y="7.7" width="7.8" height="5.3" fill="#6db33f"/>
<circle cx="26" cy="7.8" r="3.6" fill="#fff" stroke="#1b3737" stroke-width="0.55"/><path d="M24.4 9.6L26.4 5.6L28 9.2M25 8.2H27.4" fill="none" stroke="#1b3737" stroke-width="0.5" transform="rotate(90 26 7.8)"/></g><text x="891" y="781.6" font-family="Liberation Sans,Noto Sans CJK SC,sans-serif" font-size="6.4" fill="#4a4f4f" text-anchor="start" textLength="26.8" lengthAdjust="spacing">电流探头</text><rect x="966.9" y="748.4" width="26.7" height="51.6" rx="2.5" fill="#e8ebeb"/><g transform="translate(972.2 758)"><rect x="6.8" y="-5.8" width="4" height="4.6" fill="#f4f5f5" stroke="#1b3737" stroke-width="0.55"/><rect x="5.8" y="-1.5" width="6" height="1.5" fill="#f4f5f5" stroke="#1b3737" stroke-width="0.55"/>
<path d="M1.6 0H15.1Q16.7 0 16.7 1.6V30.4Q16.7 32.8 14.6 32.8H2.6Q0.2 32.8 0.2 30L0.6 1.4Q0.6 0 1.6 0Z" fill="#f4f5f5" stroke="#1b3737" stroke-width="0.6"/>
<path d="M2 1.6 Q1.6 16 1.9 29.6" fill="none" stroke="#1b3737" stroke-width="0.45"/>
<circle cx="8.55" cy="5.4" r="3.9" fill="#fff" stroke="#1b3737" stroke-width="0.6"/><path d="M6.5 3.3L8.55 7.7L10.6 3.3" fill="none" stroke="#1b3737" stroke-width="0.6"/>
<rect x="2.9" y="11.2" width="5.1" height="7" fill="#6db33f"/><rect x="8.8" y="11.2" width="5.5" height="7" fill="#6db33f"/><rect x="2.9" y="20.1" width="11.4" height="4.2" fill="#6db33f"/><rect x="2.9" y="26.2" width="11.4" height="3.1" fill="#1b3737"/>
<path d="M13 33H14.4L13.9 38.6Z" fill="#1b3737"/></g><text x="966.9" y="811.6" font-family="Liberation Sans,Noto Sans CJK SC,sans-serif" font-size="6.4" fill="#4a4f4f" text-anchor="start" textLength="26.2" lengthAdjust="spacing">电压探头</text><g><rect x="1048" y="754" width="61.8" height="36.4" rx="3.2" fill="#1b3737"/><rect x="1052.017" y="758.8204" width="53.766" height="27.160899999999998" fill="#fff"/>
<rect x="1054.798" y="790.8" width="7.107" height="3.64" rx="0.8" fill="#1b3737"/><rect x="1095.895" y="790.8" width="7.107" height="3.64" rx="0.8" fill="#1b3737"/>
<text x="1078.9" y="778.206" font-family="Liberation Sans,Noto Sans CJK SC,sans-serif" font-weight="bold" font-size="15.6" fill="#76be08" text-anchor="middle" textLength="34.299" lengthAdjust="spacingAndGlyphs">DUT</text></g><path d="M1048 763.2H996.4" stroke="#6f8d8b" stroke-width="0.72" fill="none"/><path d="M994.4 763.2L998.0 761.5V764.9000000000001Z" fill="#3f6966"/><path d="M967 763.2H931.2" stroke="#6f8d8b" stroke-width="0.72" fill="none"/><path d="M929.2 763.2L932.8000000000001 761.5V764.9000000000001Z" fill="#3f6966"/><path d="M881 763.2H842.8" stroke="#6f8d8b" stroke-width="0.72" fill="none"/><path d="M840.8 763.2L844.4 761.5V764.9000000000001Z" fill="#3f6966"/><path d="M840.4 784.2H964.6" stroke="#6f8d8b" stroke-width="0.72" fill="none"/><path d="M966.6 784.2L963.0 782.5V785.9000000000001Z" fill="#3f6966"/><path d="M993.6 784.2H1045.6" stroke="#6f8d8b" stroke-width="0.72" fill="none"/><path d="M1047.6 784.2L1044.0 782.5V785.9000000000001Z" fill="#3f6966"/><path d="M904.4 752V722.3H917.6M924.4 722.3H936.7V707" fill="none" stroke="#6f8d8b" stroke-width="0.72"/><path d="M936.7 705L935.0 708.6H938.4000000000001Z" fill="#3f6966"/><path d="M980.5 748.4V721.6H970M960 721.6H947.5V707" fill="none" stroke="#6f8d8b" stroke-width="0.72"/><path d="M947.5 705L945.8 708.6H949.2Z" fill="#3f6966"/><text x="921" y="725.4" font-family="Liberation Sans,Noto Sans CJK SC,sans-serif" font-size="9" fill="#3f6966" text-anchor="middle">I</text><text x="965" y="724.8" font-family="Liberation Sans,Noto Sans CJK SC,sans-serif" font-size="9" fill="#3f6966" text-anchor="middle">U</text><rect x="1546.6" y="662" width="69" height="40" rx="3" fill="#e8ebeb"/><g transform="translate(1562.2 667.1) scale(1.035)"><rect x="0" y="0" width="36.2" height="25.3" rx="2.6" fill="#f1f3f3" stroke="#1b3737" stroke-width="0.75"/>
<path d="M4.6 25.5H9.8L9.2 28.8H5.2ZM26.3 25.5H31.5L30.9 28.8H26.9Z" fill="#1b3737"/>
<rect x="2.4" y="3.1" width="21.8" height="13.5" rx="0.8" fill="none" stroke="#76be08" stroke-width="0.8"/>
<path d="M2.4 9.8H9.4C10.6 9.8 10.6 12.8 11.8 12.8C13.2 12.8 13.2 6.6 14.6 6.6C16 6.6 16 13 17.4 13C18.8 13 18.8 6.8 20.2 6.8C21.4 6.8 21.4 9.4 22.4 9.4H24.2" fill="none" stroke="#76be08" stroke-width="0.8"/>
<g fill="none" stroke="#1b3737" stroke-width="0.7"><circle cx="27" cy="5.4" r="1.55"/><circle cx="32.1" cy="5.4" r="1.55"/><circle cx="27" cy="10" r="1.55"/><circle cx="32.1" cy="10" r="1.55"/><circle cx="27" cy="14.6" r="1.55"/><circle cx="32.1" cy="14.6" r="1.55"/>
<rect x="4.5" y="19" width="3" height="3.6" rx="0.5"/><rect x="9" y="19" width="3" height="3.6" rx="0.5"/><path d="M14.2 19.6H20.2M14.2 22H20.2"/><rect x="23.2" y="19.2" width="9.6" height="3.2" rx="0.4"/></g></g><text x="1622" y="684.4" font-family="Liberation Sans,Noto Sans CJK SC,sans-serif" font-size="6.4" fill="#4a4f4f" text-anchor="start" textLength="20" lengthAdjust="spacing">示波器</text><rect x="1394.2" y="724" width="77.3" height="77" rx="3" fill="#e8ebeb"/><path d="M1423.3 734.3H1458.8Q1462 734.3 1462 737.5V787.4Q1462 790.3 1459 790.3H1453.4Q1451 790.3 1450 788L1449.2 786.4Q1448.6 785.2 1447 785.2H1435Q1433.4 785.2 1432.8 786.4L1432 788Q1431 790.3 1428.6 790.3H1423Q1420.1 790.3 1420.1 787.4V737.5Q1420.1 734.3 1423.3 734.3Z" fill="#1b3737"/><rect x="1423.2" y="738.2" width="35.9" height="12.4" fill="#e8ebeb"/><path d="M1423.4 744.6 L1423.9 743.6 L1424.4 742.7 L1424.9 741.9 L1425.4 741.5 L1425.9 741.3 L1426.4 741.5 L1426.9 741.9 L1427.4 742.7 L1427.9 743.6 L1428.4 744.6 L1428.8 745.6 L1429.3 746.5 L1429.8 747.3 L1430.3 747.7 L1430.8 747.9 L1431.3 747.7 L1431.8 747.3 L1432.3 746.5 L1432.8 745.6 L1433.3 744.6 L1433.8 743.6 L1434.3 742.7 L1434.8 741.9 L1435.3 741.5 L1435.8 741.3 L1436.3 741.5 L1436.8 741.9 L1437.3 742.7 L1437.8 743.6 L1438.2 744.6 L1438.7 745.6 L1439.2 746.5 L1439.7 747.3 L1440.2 747.7 L1440.7 747.9 L1441.2 747.7 L1441.7 747.3 L1442.2 746.5 L1442.7 745.6 L1443.2 744.6 L1443.7 743.6 L1444.2 742.7 L1444.7 741.9 L1445.2 741.5 L1445.7 741.3 L1446.2 741.5 L1446.7 741.9 L1447.2 742.7 L1447.7 743.6 L1448.2 744.6 L1448.6 745.6 L1449.1 746.5 L1449.6 747.3 L1450.1 747.7 L1450.6 747.9 L1451.1 747.7 L1451.6 747.3 L1452.1 746.5 L1452.6 745.6 L1453.1 744.6 L1453.6 743.6 L1454.1 742.7 L1454.6 741.9 L1455.1 741.5 L1455.6 741.3 L1456.1 741.5 L1456.6 741.9 L1457.1 742.7 L1457.6 743.6 L1458.1 744.6 L1458.5 745.6 L1459.0 746.5" fill="none" stroke="#76be08" stroke-width="0.8"/><path d="M1423.6 754.60H1440.4M1442 754.60H1458.8" stroke="#f1f3f3" stroke-width="1.15"/><path d="M1423.6 757.05H1440.4M1442 757.05H1458.8" stroke="#f1f3f3" stroke-width="1.15"/><path d="M1423.6 759.50H1440.4M1442 759.50H1458.8" stroke="#f1f3f3" stroke-width="1.15"/><path d="M1423.6 761.95H1440.4M1442 761.95H1458.8" stroke="#f1f3f3" stroke-width="1.15"/><path d="M1423.6 764.40H1440.4M1442 764.40H1458.8" stroke="#f1f3f3" stroke-width="1.15"/><path d="M1423.6 768.50H1440.4M1442 768.50H1458.8" stroke="#a9b4b3" stroke-width="0.75"/><path d="M1423.6 769.86H1440.4M1442 769.86H1458.8" stroke="#a9b4b3" stroke-width="0.75"/><path d="M1423.6 771.22H1440.4M1442 771.22H1458.8" stroke="#a9b4b3" stroke-width="0.75"/><path d="M1423.6 772.58H1440.4M1442 772.58H1458.8" stroke="#a9b4b3" stroke-width="0.75"/><path d="M1423.6 773.94H1440.4M1442 773.94H1458.8" stroke="#a9b4b3" stroke-width="0.75"/><path d="M1423.6 775.30H1440.4M1442 775.30H1458.8" stroke="#a9b4b3" stroke-width="0.75"/><path d="M1423.6 776.66H1440.4M1442 776.66H1458.8" stroke="#a9b4b3" stroke-width="0.75"/><path d="M1423.6 778.02H1440.4M1442 778.02H1458.8" stroke="#a9b4b3" stroke-width="0.75"/><path d="M1423.6 779.38H1440.4M1442 779.38H1458.8" stroke="#a9b4b3" stroke-width="0.75"/><circle cx="1425.9" cy="784.7" r="2" fill="#fff"/><circle cx="1456" cy="784.7" r="2" fill="#fff"/><path d="M1404.6 754.2H1406.4V760.4H1410.6V754.2H1412.4V760.4H1415.3V766Q1415.3 769.6 1411.8 771H1406.8Q1403.3 769.6 1403.3 766V760.4H1404.6Z" fill="#1b3737"/><path d="M1407.6 771H1411L1410.2 773.2H1408.4Z" fill="#9aa5a4"/><path d="M1409.3 773V779.4Q1409.3 784.6 1414.4 784.6H1420.4" fill="none" stroke="#1b3737" stroke-width="1.2"/><path d="M1410.4 761.8L1407.8 765.8H1409.4L1408.4 768.8L1411 764.8H1409.4Z" fill="#76be08"/><text x="1419" y="811" font-family="Liberation Sans,Noto Sans CJK SC,sans-serif" font-size="6.4" fill="#4a4f4f" text-anchor="start" textLength="27" lengthAdjust="spacing">电源系统</text><rect x="1495.9" y="736.2" width="26.7" height="54.6" rx="2.5" fill="#e8ebeb"/><g transform="translate(1501.2 746.8)"><rect x="6.8" y="-5.8" width="4" height="4.6" fill="#f4f5f5" stroke="#1b3737" stroke-width="0.55"/><rect x="5.8" y="-1.5" width="6" height="1.5" fill="#f4f5f5" stroke="#1b3737" stroke-width="0.55"/>
<path d="M1.6 0H15.1Q16.7 0 16.7 1.6V30.4Q16.7 32.8 14.6 32.8H2.6Q0.2 32.8 0.2 30L0.6 1.4Q0.6 0 1.6 0Z" fill="#f4f5f5" stroke="#1b3737" stroke-width="0.6"/>
<path d="M2 1.6 Q1.6 16 1.9 29.6" fill="none" stroke="#1b3737" stroke-width="0.45"/>
<circle cx="8.55" cy="5.4" r="3.9" fill="#fff" stroke="#1b3737" stroke-width="0.6"/><path d="M6.5 3.3L8.55 7.7L10.6 3.3" fill="none" stroke="#1b3737" stroke-width="0.6"/>
<rect x="2.9" y="11.2" width="5.1" height="7" fill="#6db33f"/><rect x="8.8" y="11.2" width="5.5" height="7" fill="#6db33f"/><rect x="2.9" y="20.1" width="11.4" height="4.2" fill="#6db33f"/><rect x="2.9" y="26.2" width="11.4" height="3.1" fill="#1b3737"/>
<path d="M13 33H14.4L13.9 38.6Z" fill="#1b3737"/></g><text x="1496" y="800.8" font-family="Liberation Sans,Noto Sans CJK SC,sans-serif" font-size="6.4" fill="#4a4f4f" text-anchor="start" textLength="26.6" lengthAdjust="spacing">电压探头</text><rect x="1558.2" y="740.7" width="45.4" height="21.3" rx="2.5" fill="#e8ebeb"/><g transform="translate(1566 743.3) scale(0.95)"><path d="M-6 11.6L0.4 11.2V13L-5.6 12.8Z" fill="#1b3737"/>
<path d="M2.6 0H29.4Q31.8 0 31.8 2V13.2Q31.8 15.7 29 15.7H2Q0 15.7 0.3 13.6L1.2 1.6Q1.4 0 2.6 0Z" fill="#f4f5f5" stroke="#1b3737" stroke-width="0.6"/>
<rect x="32" y="5.6" width="2.2" height="4.2" fill="#f4f5f5" stroke="#1b3737" stroke-width="0.5"/><rect x="34.2" y="6.2" width="3" height="3" fill="#f4f5f5" stroke="#1b3737" stroke-width="0.5"/>
<rect x="3" y="2" width="2.8" height="11" fill="#1b3737"/><rect x="7.7" y="2" width="4.2" height="11" fill="#6db33f"/><rect x="12.9" y="2" width="7.8" height="4.8" fill="#6db33f"/><rect x="12.9" y="7.7" width="7.8" height="5.3" fill="#6db33f"/>
<circle cx="26" cy="7.8" r="3.6" fill="#fff" stroke="#1b3737" stroke-width="0.55"/><path d="M24.4 9.6L26.4 5.6L28 9.2M25 8.2H27.4" fill="none" stroke="#1b3737" stroke-width="0.5" transform="rotate(90 26 7.8)"/></g><text x="1566.7" y="770.4" font-family="Liberation Sans,Noto Sans CJK SC,sans-serif" font-size="6.4" fill="#4a4f4f" text-anchor="start" textLength="26.8" lengthAdjust="spacing">电流探头</text><rect x="1638" y="736.2" width="26.7" height="54.6" rx="2.5" fill="#e8ebeb"/><g transform="translate(1643.4 746.8)"><rect x="6.8" y="-5.8" width="4" height="4.6" fill="#f4f5f5" stroke="#1b3737" stroke-width="0.55"/><rect x="5.8" y="-1.5" width="6" height="1.5" fill="#f4f5f5" stroke="#1b3737" stroke-width="0.55"/>
<path d="M1.6 0H15.1Q16.7 0 16.7 1.6V30.4Q16.7 32.8 14.6 32.8H2.6Q0.2 32.8 0.2 30L0.6 1.4Q0.6 0 1.6 0Z" fill="#f4f5f5" stroke="#1b3737" stroke-width="0.6"/>
<path d="M2 1.6 Q1.6 16 1.9 29.6" fill="none" stroke="#1b3737" stroke-width="0.45"/>
<circle cx="8.55" cy="5.4" r="3.9" fill="#fff" stroke="#1b3737" stroke-width="0.6"/><path d="M6.5 3.3L8.55 7.7L10.6 3.3" fill="none" stroke="#1b3737" stroke-width="0.6"/>
<rect x="2.9" y="11.2" width="5.1" height="7" fill="#6db33f"/><rect x="8.8" y="11.2" width="5.5" height="7" fill="#6db33f"/><rect x="2.9" y="20.1" width="11.4" height="4.2" fill="#6db33f"/><rect x="2.9" y="26.2" width="11.4" height="3.1" fill="#1b3737"/>
<path d="M13 33H14.4L13.9 38.6Z" fill="#1b3737"/></g><text x="1638.2" y="800.8" font-family="Liberation Sans,Noto Sans CJK SC,sans-serif" font-size="6.4" fill="#4a4f4f" text-anchor="start" textLength="26.6" lengthAdjust="spacing">电压探头</text><g><rect x="1686" y="746.4" width="59" height="33.8" rx="3.2" fill="#1b3737"/><rect x="1689.835" y="751.002" width="51.33" height="24.979499999999998" fill="#fff"/>
<rect x="1692.49" y="780.5999999999999" width="6.785" height="3.38" rx="0.8" fill="#1b3737"/><rect x="1731.725" y="780.5999999999999" width="6.785" height="3.38" rx="0.8" fill="#1b3737"/>
<text x="1715.5" y="768.877" font-family="Liberation Sans,Noto Sans CJK SC,sans-serif" font-weight="bold" font-size="14.8" fill="#76be08" text-anchor="middle" textLength="32.745000000000005" lengthAdjust="spacingAndGlyphs">DUT</text></g><path d="M1686 752.4H1667.4" stroke="#6f8d8b" stroke-width="0.72" fill="none"/><path d="M1665.4 752.4L1669.0 750.6999999999999V754.1Z" fill="#3f6966"/><path d="M1638 752.4H1603.6" stroke="#6f8d8b" stroke-width="0.72"/><path d="M1558.2 752.4H1525.2" stroke="#6f8d8b" stroke-width="0.72" fill="none"/><path d="M1523.2 752.4L1526.8 750.6999999999999V754.1Z" fill="#3f6966"/><path d="M1495.9 752.4H1474" stroke="#6f8d8b" stroke-width="0.72" fill="none"/><path d="M1472 752.4L1475.6 750.6999999999999V754.1Z" fill="#3f6966"/><path d="M1471.6 774.4H1493.6" stroke="#6f8d8b" stroke-width="0.72" fill="none"/><path d="M1495.6 774.4L1492.0 772.6999999999999V776.1Z" fill="#3f6966"/><path d="M1522.6 774.4H1635.6" stroke="#6f8d8b" stroke-width="0.72" fill="none"/><path d="M1637.6 774.4L1634.0 772.6999999999999V776.1Z" fill="#3f6966"/><path d="M1664.7 774.4H1683.6" stroke="#6f8d8b" stroke-width="0.72" fill="none"/><path d="M1685.6 774.4L1682.0 772.6999999999999V776.1Z" fill="#3f6966"/><path d="M1508.7 736.2V715.6H1532.4M1548 715.6H1566.7V705.6" fill="none" stroke="#6f8d8b" stroke-width="0.72"/><path d="M1566.7 703.8L1565.0 707.4H1568.4Z" fill="#3f6966"/><path d="M1581.6 740.7V722M1581.6 712.6V705.6" fill="none" stroke="#6f8d8b" stroke-width="0.72"/><path d="M1581.6 703.8L1579.8999999999999 707.4H1583.3Z" fill="#3f6966"/><path d="M1651.4 736.2V714.6H1633.4M1613.6 714.6H1596.6V705.6" fill="none" stroke="#6f8d8b" stroke-width="0.72"/><path d="M1596.6 703.8L1594.8999999999999 707.4H1598.3Z" fill="#3f6966"/><text x="1540.3" y="718.4" font-family="Liberation Sans,Noto Sans CJK SC,sans-serif" font-size="6.6" fill="#6f8d8b" text-anchor="middle">UR</text><text x="1581.6" y="719.6" font-family="Liberation Sans,Noto Sans CJK SC,sans-serif" font-size="6.6" fill="#6f8d8b" text-anchor="middle">Ipp</text><text x="1623.5" y="718" font-family="Liberation Sans,Noto Sans CJK SC,sans-serif" font-size="6.6" fill="#6f8d8b" text-anchor="middle">Upp</text><rect x="641.4" y="874" width="48" height="32.6" rx="3.6" fill="#1b3737"/><path d="M647.4 906.4H654.4L653.2 910.8H648.4ZM676.8 906.4H683.8L682.8 910.8H677.8Z" fill="#1b3737"/>
<rect x="646.7" y="878.8" width="29.3" height="18.2" rx="1.6" fill="#fff"/><path d="M679.2 882H685.6M679.2 885.5H685.6M679.2 889H685.6" stroke="#b9c4c3" stroke-width="1.3"/>
<path d="M647.6 887.9H656.6C657.8 887.9 657.8 891.6 659.2 891.6C660.6 891.6 660.6 883.8 662 883.8C663.6 883.8 663.6 891.8 665.4 891.8C667 891.8 667 883.6 668.6 883.6C669.8 883.6 670.2 888.2 672 888.2H674.6" fill="none" stroke="#5a4e4e" stroke-width="0.7"/>
<ellipse cx="684" cy="900.4" rx="2.6" ry="1.5" fill="#fff" transform="rotate(-42 684 900.4)"/>
<path d="M665.8 913.7L670.4 909.2" stroke="#1b3737" stroke-width="0.9"/><g transform="translate(669.2 910.6) rotate(-44.6)"><path d="M0 -1.1L2.4 -1.9H37Q39.2 -1.9 39.2 0Q39.2 1.9 37 1.9H2.4L0 1.1Z" fill="#6db33f" stroke="#4f8c2c" stroke-width="0.4"/><path d="M8.6 -3V3M33.2 -2.2V2.2" stroke="#1b3737" stroke-width="0.55"/></g>
<path d="M697.8 883.4Q702.6 879.4 704.2 881.6Q705.6 884 703 890L694.4 909.8" fill="none" stroke="#4a4040" stroke-width="0.6"/></svg>
<div class="t" style="left:691px;top:626.5px;font-size:17px;line-height:24px;font-weight:bold;letter-spacing:2px;color:#1a3636">电源变动测试</div>
<div class="t" style="left:1318px;top:626.5px;font-size:17px;line-height:24px;font-weight:bold;letter-spacing:2.1px;color:#1a3636">叠加纹波测试</div>
<div class="t" style="left:721px;top:884px;font-size:17px;line-height:24px;font-weight:bold;color:#000">示波器探头设置</div>
<div class="lbl" style="left:661px;top:821.5px;font-size:12.3px">示波器</div>
<div class="inp" style="left:743px;top:818px;width:79px;height:27px;line-height:27px"><svg class="a" style="right:5.5px;top:9px" width="10" height="6" viewBox="0 0 10 6"><path d="M1 1.2 L5 5 L9 1.2" fill="none" stroke="#7a7a7a" stroke-width="1.3"/></svg></div>
<div class="lbl" style="left:904px;top:821.5px;">电源</div>
<div class="inp" style="left:976px;top:818px;width:79px;height:27px;line-height:27px"><svg class="a" style="right:5.5px;top:9px" width="10" height="6" viewBox="0 0 10 6"><path d="M1 1.2 L5 5 L9 1.2" fill="none" stroke="#7a7a7a" stroke-width="1.3"/></svg></div>
<div class="lbl" style="left:1288px;top:821.5px;font-size:12.3px">示波器</div>
<div class="inp" style="left:1370px;top:818px;width:92px;height:27px;line-height:27px"><svg class="a" style="right:5.5px;top:9px" width="10" height="6" viewBox="0 0 10 6"><path d="M1 1.2 L5 5 L9 1.2" fill="none" stroke="#7a7a7a" stroke-width="1.3"/></svg></div>
<div class="lbl" style="left:1544px;top:821.5px;">电源</div>
<div class="inp" style="left:1615px;top:818px;width:92px;height:27px;line-height:27px"><svg class="a" style="right:5.5px;top:9px" width="10" height="6" viewBox="0 0 10 6"><path d="M1 1.2 L5 5 L9 1.2" fill="none" stroke="#7a7a7a" stroke-width="1.3"/></svg></div>
<div class="lbl" style="left:841px;top:918px;width:203px;text-align:center">通道选择</div>
<div class="lbl" style="left:1050px;top:918px;width:202px;text-align:center">探头比例</div>
<div class="lbl" style="left:1258px;top:918px;width:203px;text-align:center">耦合方式</div>
<div class="lbl" style="left:1467px;top:918px;width:203px;text-align:center">阻抗值</div>
<div class="lbl" style="left:1676px;top:918px;width:203px;text-align:center">通道标签</div>
<div class="lbl" style="left:672px;top:944.5px;">电源处的电压探头</div>
<div class="inp" style="left:841px;top:941px;width:203px;height:27px;line-height:27px">Ch1<svg class="a" style="right:5.5px;top:9px" width="10" height="6" viewBox="0 0 10 6"><path d="M1 1.2 L5 5 L9 1.2" fill="none" stroke="#7a7a7a" stroke-width="1.3"/></svg></div>
<div class="inp" style="left:1050px;top:941px;width:202px;height:27px;line-height:27px">10X<svg class="a" style="right:5.5px;top:9px" width="10" height="6" viewBox="0 0 10 6"><path d="M1 1.2 L5 5 L9 1.2" fill="none" stroke="#7a7a7a" stroke-width="1.3"/></svg></div>
<div class="inp" style="left:1258px;top:941px;width:203px;height:27px;line-height:27px">DC<svg class="a" style="right:5.5px;top:9px" width="10" height="6" viewBox="0 0 10 6"><path d="M1 1.2 L5 5 L9 1.2" fill="none" stroke="#7a7a7a" stroke-width="1.3"/></svg></div>
<div class="inp" style="left:1467px;top:941px;width:203px;height:27px;line-height:27px">1MΩ<svg class="a" style="right:5.5px;top:9px" width="10" height="6" viewBox="0 0 10 6"><path d="M1 1.2 L5 5 L9 1.2" fill="none" stroke="#7a7a7a" stroke-width="1.3"/></svg></div>
<div class="inp" style="left:1676px;top:941px;width:203px;padding-left:2.5px;color:#555">UR</div>
<div class="lbl" style="left:672px;top:977.5px;">DUT处的电压探头</div>
<div class="inp" style="left:841px;top:974px;width:203px;height:27px;line-height:27px">Ch2<svg class="a" style="right:5.5px;top:9px" width="10" height="6" viewBox="0 0 10 6"><path d="M1 1.2 L5 5 L9 1.2" fill="none" stroke="#7a7a7a" stroke-width="1.3"/></svg></div>
<div class="inp" style="left:1050px;top:974px;width:202px;height:27px;line-height:27px">10X<svg class="a" style="right:5.5px;top:9px" width="10" height="6" viewBox="0 0 10 6"><path d="M1 1.2 L5 5 L9 1.2" fill="none" stroke="#7a7a7a" stroke-width="1.3"/></svg></div>
<div class="inp" style="left:1258px;top:974px;width:203px;height:27px;line-height:27px">DC<svg class="a" style="right:5.5px;top:9px" width="10" height="6" viewBox="0 0 10 6"><path d="M1 1.2 L5 5 L9 1.2" fill="none" stroke="#7a7a7a" stroke-width="1.3"/></svg></div>
<div class="inp" style="left:1467px;top:974px;width:203px;height:27px;line-height:27px">1MΩ<svg class="a" style="right:5.5px;top:9px" width="10" height="6" viewBox="0 0 10 6"><path d="M1 1.2 L5 5 L9 1.2" fill="none" stroke="#7a7a7a" stroke-width="1.3"/></svg></div>
<div class="inp" style="left:1676px;top:974px;width:203px;padding-left:2.5px;color:#555">UPP</div>
<div class="inp" style="left:841px;top:1007px;width:203px;height:27px;line-height:27px"><svg class="a" style="right:5.5px;top:9px" width="10" height="6" viewBox="0 0 10 6"><path d="M1 1.2 L5 5 L9 1.2" fill="none" stroke="#7a7a7a" stroke-width="1.3"/></svg></div>
<div class="inp" style="left:1050px;top:1007px;width:202px;height:27px;line-height:27px"><svg class="a" style="right:5.5px;top:9px" width="10" height="6" viewBox="0 0 10 6"><path d="M1 1.2 L5 5 L9 1.2" fill="none" stroke="#7a7a7a" stroke-width="1.3"/></svg></div>
<div class="inp" style="left:1258px;top:1007px;width:203px;height:27px;line-height:27px"><svg class="a" style="right:5.5px;top:9px" width="10" height="6" viewBox="0 0 10 6"><path d="M1 1.2 L5 5 L9 1.2" fill="none" stroke="#7a7a7a" stroke-width="1.3"/></svg></div>
<div class="inp" style="left:1467px;top:1007px;width:203px;height:27px;line-height:27px"><svg class="a" style="right:5.5px;top:9px" width="10" height="6" viewBox="0 0 10 6"><path d="M1 1.2 L5 5 L9 1.2" fill="none" stroke="#7a7a7a" stroke-width="1.3"/></svg></div>
<div class="inp" style="left:1676px;top:1007px;width:203px;padding-left:2.5px;color:#555"></div>
<div class="a" style="left:606px;top:1011.4px;width:1314px;height:21px;background:#f5f5f5"></div>
<div class="a" style="left:1890px;top:95px;width:5px;height:916px;background:#fff"></div>
<div class="a" style="left:1895px;top:166px;width:5px;height:815px;background:#76be08"></div>
</body></html>
